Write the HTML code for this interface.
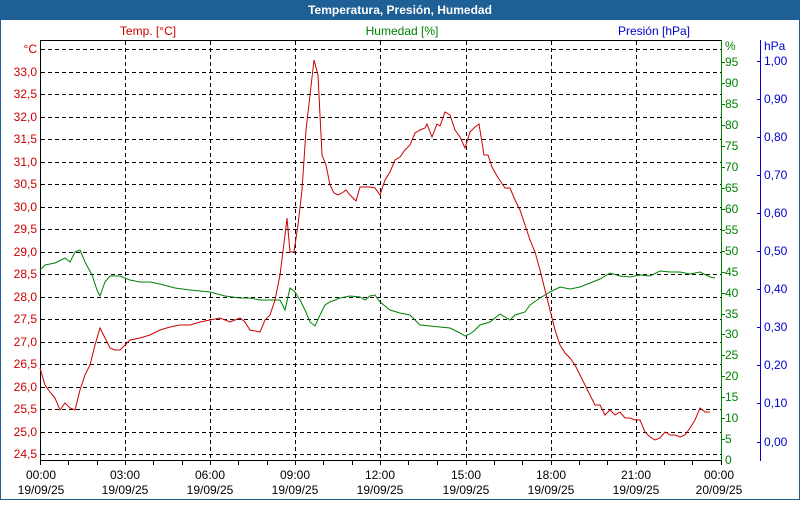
<!DOCTYPE html><html><head><style>body{margin:0;width:800px;height:500px;overflow:hidden;background:#fff}</style></head><body>
<svg width="800" height="500" xmlns="http://www.w3.org/2000/svg" font-family="'Liberation Sans',sans-serif" font-size="12">
<rect x="0.5" y="0.5" width="799" height="499" fill="#fff" stroke="#1e5f96"/>
<rect x="0" y="0" width="800" height="20" fill="#1e5f96"/>
<text x="400" y="14" fill="#fff" font-weight="bold" text-anchor="middle" font-size="12">Temperatura, Presión, Humedad</text>
<text x="148" y="35" fill="#cc0000" text-anchor="middle">Temp. [°C]</text>
<text x="402" y="35" fill="#008000" text-anchor="middle">Humedad [%]</text>
<text x="654" y="35" fill="#0000cc" text-anchor="middle">Presión [hPa]</text>
<g stroke="#000" stroke-dasharray="4,3" stroke-width="1">
<line x1="41" x2="721" y1="49.5" y2="49.5"/><line x1="41" x2="721" y1="72.5" y2="72.5"/><line x1="41" x2="721" y1="94.5" y2="94.5"/><line x1="41" x2="721" y1="117.5" y2="117.5"/><line x1="41" x2="721" y1="139.5" y2="139.5"/><line x1="41" x2="721" y1="162.5" y2="162.5"/><line x1="41" x2="721" y1="184.5" y2="184.5"/><line x1="41" x2="721" y1="207.5" y2="207.5"/><line x1="41" x2="721" y1="229.5" y2="229.5"/><line x1="41" x2="721" y1="252.5" y2="252.5"/><line x1="41" x2="721" y1="274.5" y2="274.5"/><line x1="41" x2="721" y1="297.5" y2="297.5"/><line x1="41" x2="721" y1="319.5" y2="319.5"/><line x1="41" x2="721" y1="342.5" y2="342.5"/><line x1="41" x2="721" y1="364.5" y2="364.5"/><line x1="41" x2="721" y1="387.5" y2="387.5"/><line x1="41" x2="721" y1="409.5" y2="409.5"/><line x1="41" x2="721" y1="432.5" y2="432.5"/><line x1="41" x2="721" y1="454.5" y2="454.5"/>
<line x1="125.5" x2="125.5" y1="41" y2="460"/><line x1="210.5" x2="210.5" y1="41" y2="460"/><line x1="295.5" x2="295.5" y1="41" y2="460"/><line x1="380.5" x2="380.5" y1="41" y2="460"/><line x1="466.5" x2="466.5" y1="41" y2="460"/><line x1="551.5" x2="551.5" y1="41" y2="460"/><line x1="636.5" x2="636.5" y1="41" y2="460"/>
</g>
<line x1="40" x2="722" y1="40.5" y2="40.5" stroke="#000"/>
<line x1="40.5" x2="40.5" y1="40" y2="461" stroke="#000"/>
<line x1="40" x2="722" y1="460.5" y2="460.5" stroke="#000"/>
<line x1="721.5" x2="721.5" y1="40" y2="461" stroke="#008000"/>
<line x1="760.5" x2="760.5" y1="40" y2="461" stroke="#0000cc"/>
<g stroke="#000"><path d="M40.5 461v4M68.5 461v4M97.5 461v4M125.5 461v4M153.5 461v4M182.5 461v4M210.5 461v4M238.5 461v4M267.5 461v4M295.5 461v4M323.5 461v4M352.5 461v4M380.5 461v4M408.5 461v4M437.5 461v4M466.5 461v4M494.5 461v4M522.5 461v4M551.5 461v4M579.5 461v4M607.5 461v4M636.5 461v4M664.5 461v4M692.5 461v4M721.5 461v4"/></g>
<g fill="#cc0000" text-anchor="end">
<text x="37" y="53">°C</text><text x="37" y="76">33,0</text><text x="37" y="98">32,5</text><text x="37" y="121">32,0</text><text x="37" y="143">31,5</text><text x="37" y="166">31,0</text><text x="37" y="188">30,5</text><text x="37" y="211">30,0</text><text x="37" y="233">29,5</text><text x="37" y="256">29,0</text><text x="37" y="278">28,5</text><text x="37" y="301">28,0</text><text x="37" y="323">27,5</text><text x="37" y="346">27,0</text><text x="37" y="368">26,5</text><text x="37" y="391">26,0</text><text x="37" y="413">25,5</text><text x="37" y="436">25,0</text><text x="37" y="458">24,5</text>
</g>
<g fill="#008000"><text x="725" y="50">%</text>
<text x="725" y="66">95</text><text x="725" y="87">90</text><text x="725" y="108">85</text><text x="725" y="129">80</text><text x="725" y="150">75</text><text x="725" y="171">70</text><text x="725" y="192">65</text><text x="725" y="213">60</text><text x="725" y="234">55</text><text x="725" y="255">50</text><text x="725" y="276">45</text><text x="725" y="297">40</text><text x="725" y="318">35</text><text x="725" y="338">30</text><text x="725" y="359">25</text><text x="725" y="380">20</text><text x="725" y="401">15</text><text x="725" y="422">10</text><text x="725" y="443">5</text><text x="725" y="464">0</text></g>
<path stroke="#008000" d="M722 62.5h3M722 83.5h3M722 104.5h3M722 125.5h3M722 146.5h3M722 167.5h3M722 188.5h3M722 209.5h3M722 230.5h3M722 251.5h3M722 272.5h3M722 293.5h3M722 314.5h3M722 334.5h3M722 355.5h3M722 376.5h3M722 397.5h3M722 418.5h3M722 439.5h3"/>
<g fill="#0000cc"><text x="764" y="50">hPa</text><text x="764" y="65">1,00</text><text x="764" y="103">0,90</text><text x="764" y="141">0,80</text><text x="764" y="179">0,70</text><text x="764" y="217">0,60</text><text x="764" y="255">0,50</text><text x="764" y="293">0,40</text><text x="764" y="331">0,30</text><text x="764" y="369">0,20</text><text x="764" y="407">0,10</text><text x="764" y="446">0,00</text></g>
<path stroke="#0000cc" d="M757 61.5h3M757 99.5h3M757 137.5h3M757 175.5h3M757 213.5h3M757 251.5h3M757 289.5h3M757 327.5h3M757 365.5h3M757 403.5h3M757 442.5h3"/>
<g fill="#000" text-anchor="middle">
<text x="41" y="479">00:00</text><text x="41" y="494">19/09/25</text>
<text x="125" y="479">03:00</text><text x="125" y="494">19/09/25</text>
<text x="210" y="479">06:00</text><text x="210" y="494">19/09/25</text>
<text x="295" y="479">09:00</text><text x="295" y="494">19/09/25</text>
<text x="380" y="479">12:00</text><text x="380" y="494">19/09/25</text>
<text x="466" y="479">15:00</text><text x="466" y="494">19/09/25</text>
<text x="551" y="479">18:00</text><text x="551" y="494">19/09/25</text>
<text x="636" y="479">21:00</text><text x="636" y="494">19/09/25</text>
<text x="719" y="479">00:00</text><text x="719" y="494">20/09/25</text>
</g>
<polyline fill="none" stroke="#008000" points="40,270 45,265 55,263 65,258 70,262 75,252 80,250 85,262 92,275 97,290 100,296 105,282 110,276 120,276 130,280 140,282 150,282 160,284 175,288 190,290 210,292 225,296 240,298 250,298 260,300 270,300 280,300 285,310 290,288 295,292 300,300 305,310 310,322 315,326 320,315 325,305 330,302 340,298 350,296 360,297 365,300 370,296 375,295 380,302 390,310 400,313 410,315 420,325 430,326 440,327 450,328 460,333 465,336 470,334 475,330 480,325 490,322 495,318 500,314 510,320 515,315 525,312 530,305 540,298 550,292 560,287 570,289 580,287 590,283 600,279 610,273 620,276 630,277 640,275 650,276 660,271 670,272 680,272 690,274 700,272 710,277 715,278"/>
<polyline fill="none" stroke="#cc0000" points="40,368 45,385 50,392 55,398 60,410 65,403 70,408 75,410 80,390 85,375 90,365 95,345 100,328 105,338 110,348 115,350 120,350 125,345 130,340 140,338 150,335 160,330 170,327 180,325 190,325 200,322 210,320 220,318 230,322 240,318 245,322 250,330 260,332 265,320 270,315 275,300 280,275 285,235 287,218 290,252 294,252 298,225 302,190 306,130 310,95 314,60 318,75 322,155 326,165 330,185 334,193 338,195 342,193 346,190 350,195 356,201 360,187 370,187 375,188 380,195 385,180 390,172 395,160 400,157 405,150 410,145 415,133 420,130 425,128 427,124 432,137 437,124 440,126 445,112 450,115 455,130 460,137 465,148 470,132 475,127 479,124 484,155 488,155 492,167 497,176 501,182 505,188 510,188 515,200 520,210 525,225 530,240 535,252 540,270 545,290 550,310 555,330 560,345 565,353 570,358 575,365 580,375 585,385 590,395 595,405 600,405 605,415 610,410 615,415 620,412 625,418 630,418 635,420 640,420 645,432 650,437 655,440 660,438 665,432 670,435 675,435 680,437 685,435 690,428 695,420 700,408 705,412 710,412"/>
</svg>
</body></html>
